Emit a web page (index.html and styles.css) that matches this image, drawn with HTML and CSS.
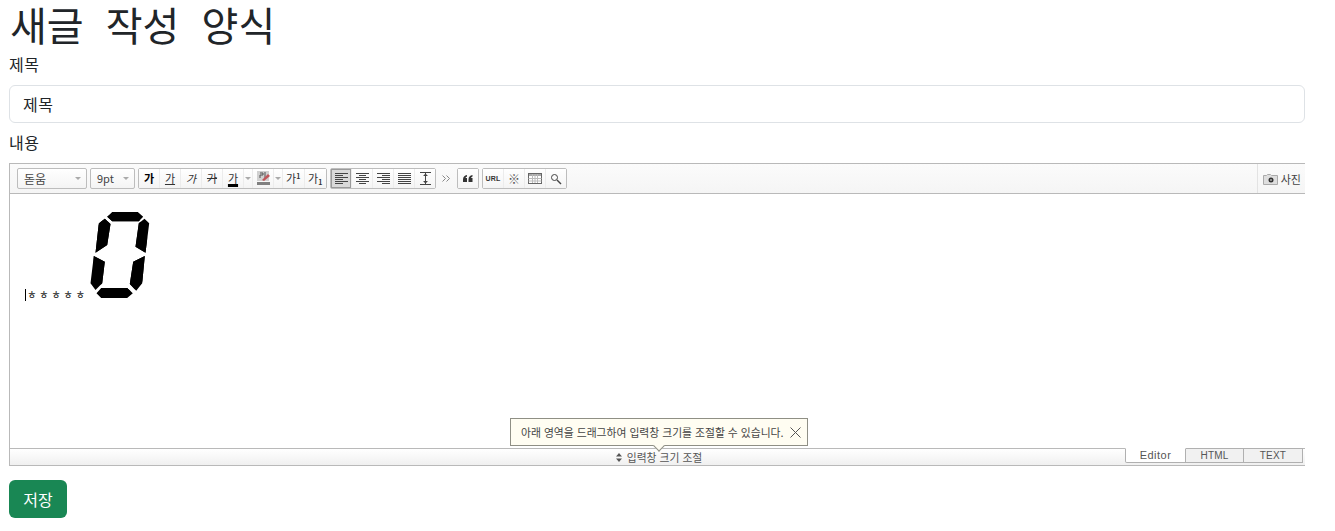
FILE: index.html
```html
<!DOCTYPE html>
<html lang="ko">
<head>
<meta charset="utf-8">
<title>새글 작성 양식</title>
<link rel="stylesheet" href="styles.css">
</head>
<body>
<main class="page">
  <h1 class="title">새글 작성 양식</h1>
  <label class="field-label">제목</label>
  <input class="title-input" type="text" value="제목">
  <label class="field-label content-label">내용</label>

  <section class="editor">
    <div class="toolbar">
      <div class="select font-select"><span>돋움</span><i class="caret-down"></i></div>
      <div class="select size-select"><span>9pt</span><i class="caret-down"></i></div>

      <div class="group">
        <button class="btn glyph bold">가</button>
        <button class="btn glyph under">가</button>
        <button class="btn glyph ital">가</button>
        <button class="btn glyph strike">가</button>
        <button class="btn glyph colored">가</button>
        <button class="btn drop"><i class="caret-down"></i></button>
        <button class="btn">
          <svg width="17" height="17" viewBox="0 0 17 17"><rect x="2" y="1" width="12" height="10" fill="#d0d0d0"/><path d="M5 3h3v2H5v3M10 2v7" stroke="#555" fill="none"/><path d="M7 10l6-6 2 2-6 5z" fill="#c0565a"/><rect x="2" y="12" width="13" height="3" fill="#808080"/></svg>
        </button>
        <button class="btn drop"><i class="caret-down"></i></button>
        <button class="btn glyph script">가<sup>1</sup></button>
        <button class="btn glyph script">가<sub>1</sub></button>
      </div>

      <div class="group">
        <button class="btn active"><svg width="13" height="11" viewBox="0 0 13 11"><path d="M0 .5h13M0 2.500h8M0 4.500h13M0 6.500h8M0 8.500h13M0 10.500h8" stroke="#444"/></svg></button>
        <button class="btn"><svg width="13" height="11" viewBox="0 0 13 11"><path d="M0 .5h13M3 2.500h7M0 4.500h13M3 6.500h7M0 8.500h13M3 10.500h7" stroke="#444"/></svg></button>
        <button class="btn"><svg width="13" height="11" viewBox="0 0 13 11"><path d="M0 .5h13M5 2.500h8M0 4.500h13M5 6.500h8M0 8.500h13M5 10.500h8" stroke="#444"/></svg></button>
        <button class="btn"><svg width="13" height="11" viewBox="0 0 13 11"><path d="M0 .5h13M0 2.500h13M0 4.500h13M0 6.500h13M0 8.500h13M0 10.500h13" stroke="#444"/></svg></button>
        <button class="btn narrow"><svg width="11" height="13" viewBox="0 0 11 13"><path d="M0 .5h11M0 12.500h11M5.500 1v11" stroke="#444"/><path d="M3 4l2.500-2.500L8 4zM3 9l2.500 2.500L8 9z" fill="#444"/></svg></button>
      </div>

      <span class="more">
        <svg width="9" height="7" viewBox="0 0 9 7"><path d="M.5 .5l3 3-3 3M4.500 .5l3 3-3 3" stroke="#888" fill="none"/></svg>
      </span>

      <div class="group">
        <button class="btn narrow"><svg width="10" height="7" viewBox="0 0 10 7"><path d="M0 4.500C0 2 1.500 .5 4 0v1.500C3 2 2.500 2.500 2.500 3H4v4H0zM5.500 4.500C5.500 2 7 .5 9.500 0v1.500C8.500 2 8 2.500 8 3h1.500v4h-4z" fill="#333"/></svg></button>
      </div>

      <div class="group">
        <button class="btn url">URL</button>
        <button class="btn symbol">※</button>
        <button class="btn"><svg width="14" height="11" viewBox="0 0 14 11"><rect x=".5" y=".5" width="13" height="10" fill="#fff" stroke="#666"/><rect x="1" y="1" width="12" height="2" fill="#aaa"/><path d="M.5 5.500h13M.5 8h13M4.500 1v9M7 1v9M9.500 1v9" stroke="#bbb"/></svg></button>
        <button class="btn narrow"><svg width="12" height="12" viewBox="0 0 12 12"><circle cx="4.500" cy="4.500" r="3" fill="none" stroke="#444"/><path d="M7 7l4 4" stroke="#444" stroke-width="1.500"/></svg></button>
      </div>

      <div class="photo">
        <svg width="15" height="12" viewBox="0 0 15 12"><path d="M.5 2.500h3l1-1h3l1 1h6v9H.5z" fill="#dedede" stroke="#aaa"/><circle cx="8" cy="7" r="2.500" fill="#333"/><circle cx="8" cy="7" r="1" fill="#aaa"/></svg>
        <span>사진</span>
      </div>
    </div>

    <div class="canvas">
      <p class="body-text"><span class="cursor"></span>ㅎ ㅎ ㅎ ㅎ ㅎ <span class="segment-digit">0</span></p>
    </div>

    <div class="tooltip">
      <span>아래 영역을 드래그하여 입력창 크기를 조절할 수 있습니다.</span>
      <svg width="11" height="11" viewBox="0 0 11 11"><path d="M.5 .5l10 10M10.500 .5l-10 10" stroke="#555" fill="none"/></svg>
      <i class="tip-arrow"></i>
    </div>

    <div class="resize-bar">
      <span></span>
      <div class="resize-label">
        <svg width="6" height="9" viewBox="0 0 6 9"><path d="M3 0l3 3.500H0zM3 9L0 5.500h6z" fill="#555"/></svg>
        <span>입력창 크기 조절</span>
      </div>
      <div class="tabs">
        <span class="tab current">Editor</span>
        <span class="tab html-tab">HTML</span>
        <span class="tab text-tab">TEXT</span>
      </div>
    </div>
  </section>

  <button class="save">저장</button>
</main>
</body>
</html>
```
FILE: styles.css
```css
* { box-sizing: border-box; }
html, body { margin: 0; padding: 0; background: #fff; }
body {
  font-family: "Noto Sans CJK KR", "Noto Sans", sans-serif;
  color: #212529;
  font-size: 16px;
  line-height: 24px;
  overflow: hidden;
}
.page { width: 1296px; margin-left: 9px; }
.title {
  margin: 0 0 5px;
  padding-left: 1px;
  font-size: 40px;
  font-weight: 400;
  line-height: 48px;
  word-spacing: 11px;
}
.field-label { display: block; height: 32px; line-height: 22px; letter-spacing: .5px; }
.title-input {
  display: block;
  width: 100%;
  height: 38px;
  margin-bottom: 8px;
  padding: 0 13px;
  border: 1px solid #dee2e6;
  border-radius: 6px;
  font: 400 16px "Noto Sans CJK KR", sans-serif;
  letter-spacing: .5px;
  color: #212529;
  outline: none;
}

.editor { position: relative; width: 100%; margin-bottom: 14px; overflow: hidden; }

.toolbar {
  display: flex;
  align-items: center;
  height: 31px;
  padding-left: 7px;
  border: 1px solid #b9b9b9;
  border-right: 0;
  background: linear-gradient(#fbfbfb, #f5f5f5);
  font-size: 11px;
  color: #444;
}
.select {
  display: flex;
  align-items: center;
  justify-content: space-between;
  height: 21px;
  padding: 0 5px 0 6px;
  border: 1px solid #bdbdbd;
  border-radius: 2px;
  background: linear-gradient(#fff, #f4f4f4);
  line-height: 19px;
}
.font-select { width: 70px; margin-right: 3px; font-size: 12px; }
.size-select { width: 45px; margin-right: 3px; }
.caret-down {
  display: block;
  width: 0; height: 0;
  border-left: 3px solid transparent;
  border-right: 3px solid transparent;
  border-top: 3px solid #aaa;
}
.group {
  display: flex;
  height: 21px;
  margin-right: 3px;
  border: 1px solid #bdbdbd;
  border-radius: 2px;
  background: #fff;
}
.btn {
  display: flex;
  align-items: center;
  justify-content: center;
  width: 21px;
  height: 19px;
  padding: 0;
  border: 0;
  border-right: 1px solid #ececec;
  background: linear-gradient(#fff, #f4f4f4);
  font-family: inherit;
  font-size: 11px;
  line-height: 19px;
  color: #333;
}
.btn:last-child { border-right: 0; }
.btn.active {
  background: #d9d9d9;
  box-shadow: inset 0 0 0 1px #9a9a9a;
}
.btn.drop { width: 9px; }
.btn.narrow { width: 20px; }
.btn.script { width: 21.500px; }
.bold { font-weight: 700; color: #000; }
.under { text-decoration: underline; text-underline-offset: 1px; }
.ital { font-style: italic; }
.strike { text-decoration: line-through; }
.colored { text-decoration: underline; text-decoration-thickness: 3px; text-underline-offset: 1px; text-decoration-color: #000; }
.script sup, .script sub { font-size: 7px; line-height: 8px; font-weight: 700; }
.script sup { margin-bottom: 6px; }
.script sub { margin-top: 6px; }
.url { font: 700 7px "Liberation Sans", sans-serif; letter-spacing: .2px; }
.symbol { font-size: 12px; color: #555; }
.more { display: flex; width: 21px; justify-content: center; margin-left: -3px; }
.photo {
  display: flex;
  align-items: center;
  gap: 3px;
  height: 29px;
  margin-left: auto;
  padding: 0 4px 0 5px;
  border-left: 1px solid #e3e3e3;
  font-size: 11px;
}

.canvas {
  height: 254px;
  border-left: 1px solid #b9b9b9;
  background: #fff;
  padding: 14px 0 0 15px;
}
.body-text {
  margin: 0;
  display: flex;
  align-items: flex-end;
  height: 93px;
  font-size: 10.500px;
  letter-spacing: -.25px;
  line-height: 13px;
  color: #222;
  white-space: pre;
}
.cursor {
  display: block;
  width: 1px;
  height: 12px;
  margin-right: 1px;
  background: #000;
}
.segment-digit {
  display: block;
  flex: none;
  width: 64px;
  height: 94px;
  margin-left: 1px;
  margin-bottom: -1px;
  overflow: visible;
  text-align: center;
  font: 900 110px/94px Roboto, sans-serif;
  color: #000;
  -webkit-text-stroke: 60px #000;
  clip-path: path("M18.7 8.700L23.700 4L49.300 4L54.700 8.700L50.300 13.300L23.700 13.300ZM10.300 15.300L16.300 10.700L22 16L18.700 37L7 44.700ZM50.300 15.300L56 10.700L60.700 15.300L57 44.700L47 38.700ZM5.300 48L16.300 53.700L13.700 75.300L7 82L2 75.300ZM56.300 48L53.700 75.300L47.700 82.700L41.300 76L44.700 53.700ZM8 85.300L12.700 80L38.700 80L44.300 85.300L38.700 90L12.700 90Z");
}

.tooltip {
  position: absolute;
  left: 501px;
  top: 255px;
  display: flex;
  align-items: center;
  justify-content: space-between;
  width: 298px;
  height: 28px;
  padding: 0 6px 0 10px;
  border: 1px solid #8f8f85;
  background: #fffdf2;
  font-size: 10.800px;
  line-height: 26px;
  color: #444;
  white-space: nowrap;
  z-index: 2;
}
.tip-arrow {
  position: absolute;
  left: 144px;
  bottom: -5px;
  width: 8px;
  height: 8px;
  background: #fffdf2;
  border-right: 1px solid #8f8f85;
  border-bottom: 1px solid #8f8f85;
  transform: rotate(45deg);
}

.resize-bar {
  display: grid;
  grid-template-columns: 1fr auto 1fr;
  height: 18px;
  border: 1px solid #b9b9b9;
  border-right: 0;
  background: linear-gradient(#fff, #f0f0f0);
  font-size: 10.800px;
  line-height: 16px;
  color: #555;
}
.resize-label { display: flex; align-items: center; gap: 5px; padding-left: 3px; }
.tabs { display: flex; justify-self: end; height: 15px; margin-right: 2px; margin-top: -1px; font: 10px/14px "Liberation Sans", sans-serif; }
.tab {
  text-align: center;
  border: 1px solid #b0b0b0;
  border-left: 0;
  background: #f1f1f1;
  color: #555;
  letter-spacing: .2px;
}
.html-tab { width: 58px; }
.text-tab { width: 59px; }
.tab.current {
  width: 61px;
  border-top-color: transparent;
  border-left: 1px solid #b0b0b0;
  background: #fff;
  font-size: 11px;
  letter-spacing: .5px;
  line-height: 12px;
  border-radius: 0 0 0 2px;
}

.save {
  display: block;
  width: 58px;
  height: 38px;
  padding: 0;
  border: 0;
  border-radius: 6px;
  background: #198754;
  color: #fff;
  font: 400 16px "Noto Sans CJK KR", sans-serif;
}
```
